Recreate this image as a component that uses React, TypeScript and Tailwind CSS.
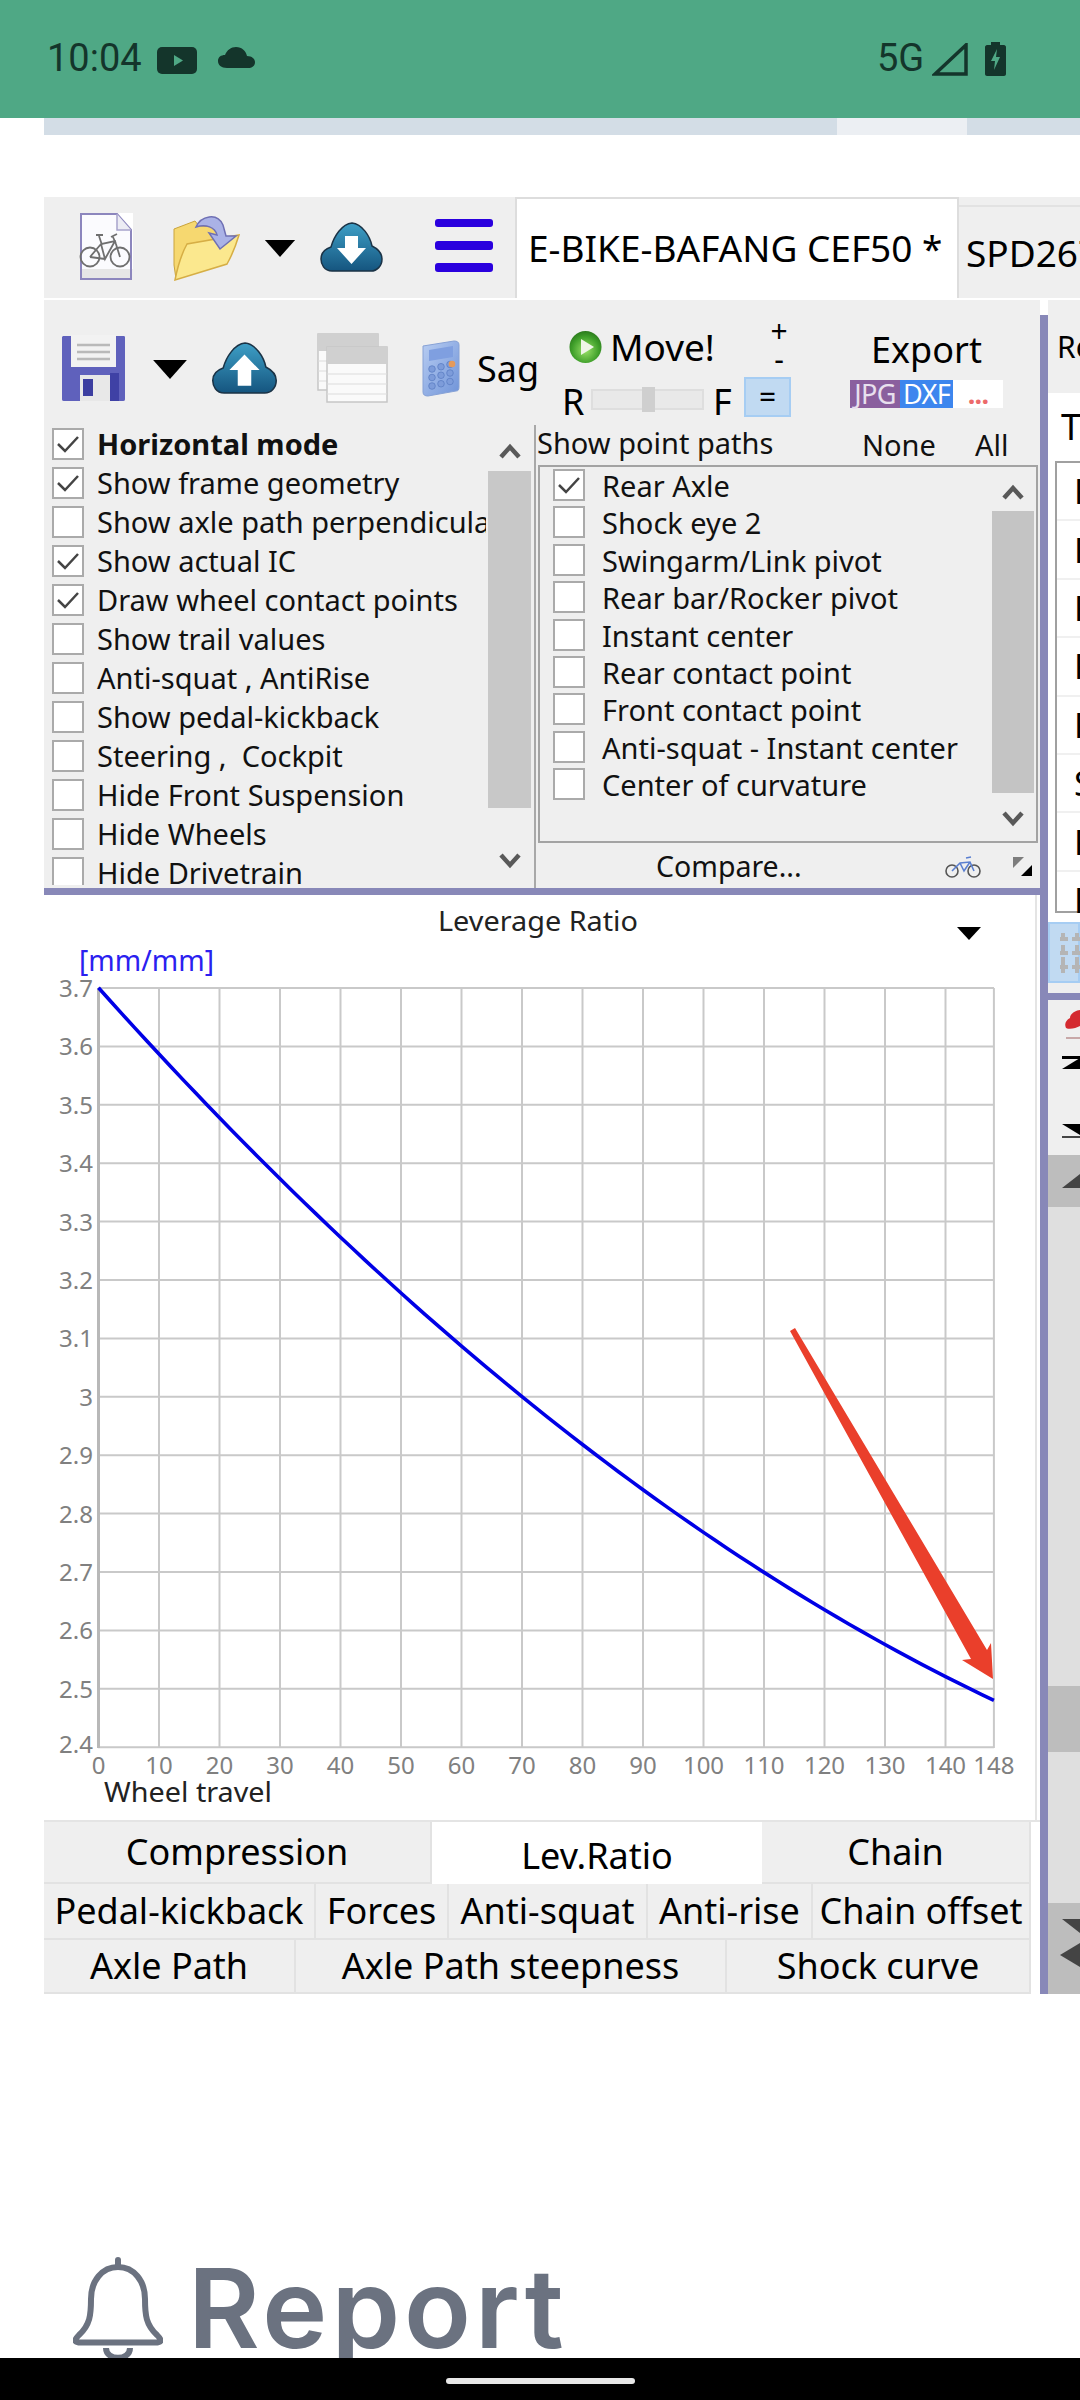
import React from "react";

const leftItems: [string, boolean][] = [
  ["Horizontal mode", true],
  ["Show frame geometry", true],
  ["Show axle path perpendicular", false],
  ["Show actual IC", true],
  ["Draw wheel contact points", true],
  ["Show trail values", false],
  ["Anti-squat , AntiRise", false],
  ["Show pedal-kickback", false],
  ["Steering ,  Cockpit", false],
  ["Hide Front Suspension", false],
  ["Hide Wheels", false],
  ["Hide Drivetrain", false],
];
const rightItems = [
  "Rear Axle",
  "Shock eye 2",
  "Swingarm/Link pivot",
  "Rear bar/Rocker pivot",
  "Instant center",
  "Rear contact point",
  "Front contact point",
  "Anti-squat - Instant center",
  "Center of curvature",
];

function Check({ on }: { on: boolean }) {
  return (
    <span className="flex h-[32px] w-[32px] shrink-0 items-center justify-center border-2 border-[#aaaaaa] bg-white">
      {on && (
        <svg width="24" height="20" viewBox="0 0 24 20">
          <path d="M2 10 L9 17 L22 3" fill="none" stroke="#444444" strokeWidth="2.5" />
        </svg>
      )}
    </span>
  );
}

function Chevron({ up }: { up: boolean }) {
  return (
    <svg width="22" height="16" viewBox="0 0 22 16">
      <path d={up ? "M2 14 L11 4 L20 14" : "M2 2 L11 12 L20 2"} fill="none" stroke="#595959" strokeWidth="4.5" />
    </svg>
  );
}

function Tri({ w, h }: { w: number; h: number }) {
  return (
    <svg width={w} height={h} viewBox="0 0 32 18">
      <path d="M0 0 H32 L16 18 Z" fill="#000000" />
    </svg>
  );
}

function Cloud({ up, id, w, h }: { up: boolean; id: string; w: number; h: number }) {
  return (
    <svg width={w} height={h} viewBox="0 0 63 50">
      <defs>
        <linearGradient id={id} x1="0" y1="0" x2="0" y2="1">
          <stop offset="0" stopColor="#3e9fc6" />
          <stop offset="1" stopColor="#15557f" />
        </linearGradient>
      </defs>
      <path
        d="M12 49 C4 49 1 42 1 37 C1 31 5 27 11 25 C14 14 22 2 32 1 C42 2 50 14 52 24 C58 27 62 31 62 37 C62 44 57 49 51 49 Z"
        fill={`url(#${id})`}
        stroke="#1b3346"
        strokeWidth="1.5"
      />
      <path
        d={up ? "M31.5 12 L46 27 H38 V42 H25 V27 H17 Z" : "M25 14 H38 V26 H46 L31.5 42 L17 26 H25 Z"}
        fill="#ffffff"
      />
    </svg>
  );
}

function DocIcon() {
  return (
    <svg width="56" height="68" viewBox="0 0 56 68">
      <rect x="38" y="0" width="16" height="56" fill="#ffffff" />
      <path d="M2 1 H38 L52 17 V66 H2 Z" fill="#fbfbfe" stroke="#8c86bd" strokeWidth="2" />
      <path d="M38 1 V17 H52" fill="#ececf4" stroke="#a8a4cc" strokeWidth="1.5" />
      <rect x="3" y="56" width="48" height="9" fill="#e6e6e6" />
      <g fill="none" stroke="#6f6f6f" strokeWidth="1.8">
        <circle cx="11" cy="44" r="9.5" />
        <circle cx="41" cy="44" r="9.5" />
        <path d="M11 44 L22 31 L36 28 L41 44 M22 31 L26 46 L36 28 M11 44 L26 46 M20 23 L23 32 M34 24 L37 31 M17 22 H24 M32 24 L38 21" />
      </g>
    </svg>
  );
}

function FolderIcon() {
  return (
    <svg width="68" height="66" viewBox="0 0 68 66">
      <path d="M1 14 L22 6 L26 11 L44 12 V30 L3 64 L1 50 Z" fill="#f6d870" stroke="#c9a33c" strokeWidth="1" />
      <path d="M2 65 C4 55 9 38 14 29 L66 20 C63 30 58 42 54 49 Z" fill="#fbe88e" stroke="#d6ae45" strokeWidth="1.5" />
      <path d="M23 12 C28 1 44 -3 50 10 L53 21 L63 21 L47 34 L36 18 L44 20 C42 12 33 9 23 12 Z" fill="#aab2e6" stroke="#6f70b4" strokeWidth="1.5" />
    </svg>
  );
}

function Burger() {
  return (
    <svg width="58" height="54" viewBox="0 0 58 54">
      <g fill="#2a00de">
        <rect x="0" y="0" width="58" height="8" rx="3" />
        <rect x="0" y="22" width="58" height="9" rx="3" />
        <rect x="0" y="44" width="58" height="9" rx="3" />
      </g>
    </svg>
  );
}

function Floppy() {
  return (
    <svg width="65" height="67" viewBox="0 0 65 67">
      <path d="M2 1 H63 C64 1 64 2 64 3 V64 C64 66 63 66 61 66 H4 C2 66 1 66 1 64 V2 Z" fill="#5f61bc" />
      <rect x="10" y="0" width="45" height="32" fill="#f2f2f2" />
      <g stroke="#b9b9b9" strokeWidth="2.5">
        <line x1="16" y1="10" x2="49" y2="10" />
        <line x1="16" y1="17" x2="49" y2="17" />
        <line x1="16" y1="24" x2="49" y2="24" />
      </g>
      <rect x="19" y="40" width="32" height="26" fill="#e8e8e8" />
      <rect x="22" y="44" width="10" height="17" fill="#3c3ea0" />
      <rect x="49" y="38" width="9" height="28" fill="#3f41a5" />
    </svg>
  );
}

function Tables() {
  const body = (x: number, y: number, w: number, h: number) => (
    <g>
      <rect x={x} y={y} width={w} height={h} fill="#fafafa" stroke="#c6c6c6" strokeWidth="1.5" />
      <rect x={x} y={y} width={w} height="17" fill="#d0d0d0" />
      <g stroke="#dcdcdc" strokeWidth="1">
        <line x1={x} y1={y + 27} x2={x + w} y2={y + 27} />
        <line x1={x} y1={y + 37} x2={x + w} y2={y + 37} />
        <line x1={x} y1={y + 47} x2={x + w} y2={y + 47} />
      </g>
    </g>
  );
  return (
    <svg width="71" height="70" viewBox="0 0 71 70">
      {body(1, 1, 60, 56)}
      {body(10, 14, 60, 55)}
    </svg>
  );
}

function Calc() {
  const keys: [number, number][] = [];
  for (let r = 0; r < 3; r++) for (let c = 0; c < 3; c++) keys.push([10 + c * 9, 29 + r * 8.5]);
  return (
    <svg width="38" height="57" viewBox="0 0 38 57">
      <defs>
        <linearGradient id="calcg" x1="0" y1="0" x2="1" y2="1">
          <stop offset="0" stopColor="#b8cdf2" />
          <stop offset="1" stopColor="#6f93d8" />
        </linearGradient>
      </defs>
      <path d="M1 6 L32 1 C35 1 37 2 37 5 V47 C37 50 36 51 34 51 L6 56 C3 56 1 55 1 52 Z" fill="url(#calcg)" stroke="#87a2d6" />
      <path d="M7 10 L31 6 V17 L7 21 Z" fill="#7f9fe0" />
      {keys.map(([x, y], i) => (
        <circle key={i} cx={x} cy={y - (x - 10) / 4} r="3.3" fill="#7d9cda" stroke="#587ac0" strokeWidth="0.7" />
      ))}
      <circle cx="30" cy="24" r="3.3" fill="#e59a5b" />
    </svg>
  );
}

function Play() {
  return (
    <svg width="33" height="34" viewBox="0 0 33 34">
      <defs>
        <radialGradient id="playg" cx="0.5" cy="0.6" r="0.6">
          <stop offset="0" stopColor="#9be26a" />
          <stop offset="0.7" stopColor="#3f9f2a" />
          <stop offset="1" stopColor="#2b7a1c" />
        </radialGradient>
      </defs>
      <circle cx="16.5" cy="17" r="16" fill="url(#playg)" />
      <path d="M12 9 L25 17 L12 25 Z" fill="#eef5e8" />
    </svg>
  );
}

function SmallBike() {
  return (
    <svg width="38" height="22" viewBox="0 0 38 22">
      <g fill="none" stroke="#555555" strokeWidth="1.6">
        <circle cx="8" cy="15" r="6" />
        <circle cx="30" cy="15" r="6" />
      </g>
      <path d="M8 15 L16 7 L26 6 L30 15 M16 7 L20 15 L26 6 M22 2 L27 1" fill="none" stroke="#5a7fd0" strokeWidth="1.6" />
    </svg>
  );
}

function Corner() {
  return (
    <svg width="19" height="19" viewBox="0 0 19 19">
      <path d="M0 0 H11 L0 11 Z" fill="#7d7d7d" />
      <path d="M19 19 H8 L19 8 Z" fill="#000000" />
    </svg>
  );
}

function Chart() {
  const xAt = (mm: number) => 98.5 + mm * 6.05;
  const yAt = (v: number) => 1747 - (v - 2.4) * 584;
  const curve: string[] = [];
  for (let m = 0; m <= 148; m += 2) {
    curve.push(`${xAt(m)},${yAt(3.7 - 0.011577 * m + 0.00002252 * m * m)}`);
  }
  const ticks = [0, 10, 20, 30, 40, 50, 60, 70, 80, 90, 100, 110, 120, 130, 140, 148];
  const vals = ["3.7", "3.6", "3.5", "3.4", "3.3", "3.2", "3.1", "3", "2.9", "2.8", "2.7", "2.6", "2.5", "2.4"];
  return (
    <svg width="996" height="927" viewBox="44 895 996 927" className="block font-['Noto_Sans',sans-serif]">
      <rect x="44" y="895" width="996" height="927" fill="#ffffff" />
      <rect x="1035" y="895" width="2" height="925" fill="#e4e4e4" />
      <rect x="44" y="1820" width="996" height="2" fill="#e4e4e4" />
      <text x="438" y="931" fontSize="28" fill="#222222" textLength="200" lengthAdjust="spacingAndGlyphs">Leverage Ratio</text>
      <path d="M957 927 H981 L969 940 Z" fill="#000000" />
      <text x="79" y="971" fontSize="29" fill="#2a20f0" textLength="135" lengthAdjust="spacingAndGlyphs">[mm/mm]</text>
      {vals.map((v, i) => (
        <g key={v}>
          <line x1="98" x2="994" y1={988 + i * 58.4} y2={988 + i * 58.4} stroke="#c9c9c9" strokeWidth="2" />
          <text x="93" y={997 + i * 58.4 - (i === 13 ? 3 : 0)} fontSize="24" fill="#808080" textAnchor="end">{v}</text>
        </g>
      ))}
      {ticks.map((t) => (
        <g key={t}>
          <line x1={xAt(t)} x2={xAt(t)} y1="988" y2="1748" stroke={t === 0 ? "#b8b8b8" : "#c9c9c9"} strokeWidth={t === 0 ? 3 : 2} />
          <text x={xAt(t)} y="1774" fontSize="24" fill="#808080" textAnchor="middle">{t}</text>
        </g>
      ))}
      <text x="104" y="1802" fontSize="28" fill="#222222" textLength="168" lengthAdjust="spacingAndGlyphs">Wheel travel</text>
      <polyline points={curve.join(" ")} fill="none" stroke="#0000e6" strokeWidth="3.6" />
      <path d="M790 1331 L795 1328 L987 1650 L991 1643 L993 1679 L962 1660 L971 1659 Z" fill="#ea3f2b" />
    </svg>
  );
}

function Tab({ w, h, label, active, pt }: { w: string; h: string; label: string; active?: boolean; pt?: string }) {
  return (
    <div
      className={`${w} ${h} ${pt ?? ""} flex items-center justify-center overflow-hidden text-[36px] leading-none whitespace-nowrap text-black ${
        active ? "bg-white" : "border-r-2 border-b-2 border-[#e2e2e2] bg-[#efefef]"
      }`}
    >
      {label}
    </div>
  );
}

export default function App() {
  return (
    <div className="flex h-[2400px] w-[1080px] flex-col overflow-hidden bg-white font-['Noto_Sans',sans-serif]">
      {/* status bar */}
      <div className="flex h-[118px] shrink-0 items-start bg-[#4fa885] text-[#14352b]">
        <span className="mt-[36px] ml-[47px] w-[94px] font-['Roboto',sans-serif] text-[38px] leading-[44px]">10:04</span>
        <svg className="mt-[47px] ml-[16px]" width="40" height="27" viewBox="0 0 40 27">
          <rect width="40" height="27" rx="5" fill="#14352b" />
          <path d="M17 8 L26 13.5 L17 19 Z" fill="#4fa885" />
        </svg>
        <svg className="mt-[47px] ml-[21px]" width="37" height="22" viewBox="0 0 37 22">
          <path d="M9 21 C3 21 0 18 0 14 C0 10 3 8 7 8 C9 3 13 0 18 0 C24 0 28 4 29 9 C34 9 37 12 37 15 C37 19 34 21 30 21 Z" fill="#14352b" />
        </svg>
        <span className="mt-[36px] ml-[622px] w-[46px] font-['Roboto',sans-serif] text-[38px] leading-[44px]">5G</span>
        <svg className="mt-[43px] ml-[9px]" width="36" height="33" viewBox="0 0 36 33">
          <path d="M34 2 V31 H3 Z" fill="none" stroke="#14352b" strokeWidth="3.5" />
        </svg>
        <svg className="mt-[42px] ml-[17px]" width="21" height="34" viewBox="0 0 21 34">
          <path d="M6 0 H15 V3 H19 C20 3 21 4 21 5 V32 C21 33 20 34 19 34 H2 C1 34 0 33 0 32 V5 C0 4 1 3 2 3 H6 Z" fill="#14352b" />
          <path d="M12 7 L6 19 H10 L9 28 L15 15 H11 Z" fill="#4fa885" />
        </svg>
      </div>

      {/* clipped strip of page above */}
      <div className="ml-[44px] flex h-[17px] shrink-0">
        <div className="w-[793px] bg-[#d3dde6]" />
        <div className="w-[130px] bg-[#eceff3]" />
        <div className="flex-1 bg-[#d3dde6]" />
      </div>
      <div className="h-[62px] shrink-0" />

      {/* embedded app */}
      <div className="ml-[44px] h-[1797px] shrink-0">
        {/* file tabs */}
        <div className="flex h-[101px] items-start overflow-hidden bg-[#efefef]">
          <div className="mt-[16px] ml-[35px]"><DocIcon /></div>
          <div className="mt-[18px] ml-[38px]"><FolderIcon /></div>
          <div className="mt-[43px] ml-[23px]"><Tri w={32} h={17} /></div>
          <div className="mt-[25px] ml-[24px]"><Cloud up={false} id="cl1" w={63} h={50} /></div>
          <div className="mt-[22px] ml-[52px]"><Burger /></div>
          <div className="ml-[22px] flex h-[101px] w-[444px] shrink-0 items-center border-x-2 border-t-2 border-[#dddddd] bg-white pb-[2px] pl-[11px] text-[37px] leading-none whitespace-nowrap text-black">
            E-BIKE-BAFANG CEF50 *
          </div>
          <div className="mt-[8px] flex h-[93px] flex-1 items-center border-t-2 border-[#e2e2e2] pl-[7px] text-[37px] leading-none whitespace-nowrap text-black">
            SPD267
          </div>
        </div>
        <div className="h-[2px] bg-white" />

        <div className="flex h-[1694px]">
          {/* left column */}
          <div className="flex w-[996px] shrink-0 flex-col bg-[#efefef]">
            {/* toolbar */}
            <div className="flex h-[125px] shrink-0 items-start">
              <div className="mt-[35px] ml-[17px]"><Floppy /></div>
              <div className="mt-[60px] ml-[27px]"><Tri w={34} h={19} /></div>
              <div className="mt-[42px] ml-[24px]"><Cloud up={true} id="cl2" w={67} h={52} /></div>
              <div className="mt-[33px] ml-[39px]"><Tables /></div>
              <div className="mt-[40px] ml-[34px]"><Calc /></div>
              <span className="mt-[46px] ml-[17px] w-[63px] text-[36px] leading-[46px] text-black">Sag</span>
              <div className="ml-[22px] flex w-[229px] flex-col">
                <div className="flex h-[77px] items-start">
                  <div className="mt-[30px] ml-[7px]"><Play /></div>
                  <span className="mt-[25px] ml-[8px] w-[159px] text-[37px] leading-[44px] text-black">Move!</span>
                  <div className="mt-[17px] flex w-[20px] flex-col items-center text-[30px] leading-[28px] text-black">
                    <span>+</span>
                    <span>-</span>
                  </div>
                </div>
                <div className="flex h-[48px] items-start">
                  <span className="mt-[3px] w-[29px] text-[36px] leading-[44px] text-black">R</span>
                  <div className="relative mt-[12px] h-[21px] w-[113px] border-2 border-[#dedede] bg-[#e9e9e9]">
                    <div className="absolute top-[-4px] left-[49px] h-[25px] w-[13px] bg-[#cfcfcf]" />
                  </div>
                  <span className="mt-[3px] ml-[9px] w-[31px] text-[36px] leading-[44px] text-black">F</span>
                  <div className="flex h-[40px] w-[47px] items-center justify-center border-2 border-[#a6cdf3] bg-[#c1daf2] text-[30px] leading-none text-black">=</div>
                </div>
              </div>
              <div className="ml-[59px] flex w-[153px] flex-col items-center">
                <span className="mt-[28px] text-[36px] leading-[44px] text-black">Export</span>
                <div className="mt-[8px] flex h-[28px] w-[153px] text-[27px] leading-[28px] tracking-tight">
                  <span className="w-[50px] bg-[#8a5f9e] text-center text-[#e8e0ee]">JPG</span>
                  <span className="w-[53px] bg-[#3d86ee] text-center text-white">DXF</span>
                  <span className="flex-1 bg-white text-center font-bold text-[#ec6a6a]">...</span>
                </div>
              </div>
            </div>

            {/* option lists */}
            <div className="flex h-[463px] shrink-0">
              <div className="flex h-[460px] w-[490px] shrink-0">
                <div className="w-[442px] shrink-0 overflow-hidden pt-[3px]">
                  {leftItems.map(([label, on], i) => (
                    <div key={label} className="flex h-[39px] items-start pl-[8px]">
                      <Check on={on} />
                      <span className={`ml-[13px] text-[29px] leading-[32px] whitespace-pre text-[#111111] ${i === 0 ? "font-bold" : ""}`}>
                        {label}
                      </span>
                    </div>
                  ))}
                </div>
                <div className="ml-[2px] flex w-[43px] shrink-0 flex-col items-center">
                  <div className="flex h-[46px] items-center justify-center pt-[5px]"><Chevron up={true} /></div>
                  <div className="h-[337px] w-full bg-[#c8c8c8]" />
                  <div className="mt-[45px]"><Chevron up={false} /></div>
                </div>
              </div>
              <div className="flex w-[506px] shrink-0 flex-col border-l-2 border-[#a8a8a8]">
                <div className="flex h-[40px] shrink-0 items-start text-[29px] leading-[36px] text-[#111111]">
                  <span className="ml-[1px] w-[325px]">Show point paths</span>
                  <span className="mt-[2px] w-[113px]">None</span>
                  <span className="mt-[2px]">All</span>
                </div>
                <div className="ml-[2px] flex h-[378px] w-[500px] shrink-0 border-2 border-[#a3a3a3]">
                  <div className="w-[450px] shrink-0 pt-[2px]">
                    {rightItems.map((label, i) => (
                      <div key={label} className="flex h-[37.4px] items-start pl-[13px]">
                        <Check on={i === 0} />
                        <span className="mt-[1px] ml-[17px] text-[29px] leading-[32px] whitespace-nowrap text-[#111111]">{label}</span>
                      </div>
                    ))}
                  </div>
                  <div className="ml-[2px] flex w-[42px] shrink-0 flex-col items-center">
                    <div className="flex h-[44px] items-center justify-center pt-[6px]"><Chevron up={true} /></div>
                    <div className="h-[282px] w-full bg-[#c4c4c4]" />
                    <div className="mt-[18px]"><Chevron up={false} /></div>
                  </div>
                </div>
                <div className="flex h-[45px] shrink-0 items-center pt-[2px]">
                  <span className="ml-[120px] w-[288px] text-[28.5px] leading-none text-[#111111]">Compare...</span>
                  <SmallBike />
                  <div className="ml-[31px]"><Corner /></div>
                </div>
              </div>
            </div>

            <div className="h-[7px] shrink-0 bg-[#8888b8]" />
            <Chart />

            {/* chart tabs */}
            <div className="flex h-[172px] shrink-0 flex-col bg-white">
              <div className="flex">
                <Tab w="w-[388px]" h="h-[62px]" label="Compression" />
                <Tab w="w-[330px]" h="h-[62px]" label="Lev.Ratio" active pt="pt-[6px]" />
                <Tab w="w-[269px]" h="h-[62px]" label="Chain" />
              </div>
              <div className="flex">
                <Tab w="w-[272px]" h="h-[56px]" label="Pedal-kickback" />
                <Tab w="w-[133px]" h="h-[56px]" label="Forces" />
                <Tab w="w-[199px]" h="h-[56px]" label="Anti-squat" />
                <Tab w="w-[165px]" h="h-[56px]" label="Anti-rise" />
                <Tab w="w-[218px]" h="h-[56px]" label="Chain offset" />
              </div>
              <div className="flex">
                <Tab w="w-[252px]" h="h-[54px]" label="Axle Path" />
                <Tab w="w-[431px]" h="h-[54px]" label="Axle Path steepness" />
                <Tab w="w-[304px]" h="h-[54px]" label="Shock curve" />
              </div>
            </div>
          </div>

          {/* splitter */}
          <div className="mt-[15px] w-[8px] shrink-0 bg-[#8888b8]" />

          {/* right strip */}
          <div className="flex w-[32px] shrink-0 flex-col overflow-hidden">
            <div className="flex h-[93px] shrink-0 items-center bg-[#efefef] pl-[9px] text-[30px] leading-none whitespace-nowrap text-black">
              Report
            </div>
            <div className="flex h-[68px] shrink-0 items-center bg-white pl-[13px] text-[36px] leading-none text-black">T</div>
            <div className="ml-[7px] h-[452px] shrink-0 border-y-2 border-l-2 border-[#a0a0a0] bg-white">
              {["R", "R", "R", "R", "R", "S", "R", "R", "R"].map((c, i) => (
                <div
                  key={i}
                  className="flex h-[58.4px] items-center overflow-hidden border-b-2 border-[#f0f0f0] pl-[17px] text-[34px] leading-none text-black"
                >
                  {c}
                </div>
              ))}
            </div>
            <div className="h-[9px] shrink-0 bg-white" />
            <div className="flex h-[61px] shrink-0 items-center border-2 border-[#a6cdf3] bg-[#c1daf2] pl-[10px]">
              <svg width="22" height="40" viewBox="0 0 22 40" className="shrink-0">
                <g stroke="#b5b5b5" strokeWidth="4" strokeDasharray="8 4">
                  <line x1="0" y1="6" x2="22" y2="6" />
                  <line x1="0" y1="20" x2="22" y2="20" />
                  <line x1="0" y1="34" x2="22" y2="34" />
                  <line x1="3" y1="0" x2="3" y2="40" />
                  <line x1="17" y1="0" x2="17" y2="40" />
                </g>
              </svg>
            </div>
            <div className="h-[10px] shrink-0 bg-[#efefef]" />
            <div className="h-[7px] shrink-0 bg-[#8888b8]" />
            <div className="flex h-[155px] shrink-0 flex-col bg-[#efefef]">
              <svg className="mt-[10px] ml-[16px]" width="16" height="30" viewBox="0 0 16 30">
                <path d="M16 0 C8 1 6 6 6 8 C2 10 0 14 2 18 C6 20 12 18 16 16 Z" fill="#d42a30" />
                <path d="M2 28 H16" stroke="#c8a8a8" strokeWidth="2" />
              </svg>
              <svg className="mt-[16px] ml-[14px]" width="18" height="14" viewBox="0 0 18 14">
                <path d="M0 3 H18 V0 H0 Z" fill="#000000" />
                <path d="M0 13 L18 13 V2 Z" fill="#000000" />
              </svg>
              <svg className="mt-[54px] ml-[14px]" width="18" height="15" viewBox="0 0 18 15">
                <path d="M0 0 L18 0 V11 Z" fill="#000000" />
                <path d="M0 13 H18" stroke="#444444" strokeWidth="2" />
              </svg>
            </div>
            <div className="flex h-[52px] shrink-0 items-center bg-[#bdbdbd] pl-[14px]">
              <svg width="18" height="14" viewBox="0 0 18 14"><path d="M0 14 L18 14 V0 Z" fill="#444444" /></svg>
            </div>
            <div className="h-[479px] shrink-0 bg-[#dfdfdf]" />
            <div className="h-[66px] shrink-0 bg-[#bdbdbd]" />
            <div className="h-[151px] shrink-0 bg-[#dfdfdf]" />
            <div className="flex h-[91px] shrink-0 flex-col bg-[#bdbdbd] pl-[14px]">
              <svg className="mt-[16px]" width="18" height="14" viewBox="0 0 18 14"><path d="M0 0 H18 V14 Z" fill="#444444" /></svg>
              <svg className="mt-[10px] -ml-[2px]" width="20" height="24" viewBox="0 0 20 24"><path d="M0 12 L20 0 V24 Z" fill="#444444" /></svg>
            </div>
          </div>
        </div>
      </div>

      {/* page content below */}
      <div className="flex h-[364px] shrink-0 items-start overflow-hidden pt-[263px] pl-[73px] text-[#6b7280]">
        <svg width="90" height="101" viewBox="0 0 90 101" className="shrink-0">
          <path
            d="M45 10 C29 10 18 24 18 42 C18 58 17 68 6 78 C0 84 2 85.5 8 85.5 H82 C88 85.5 90 84 84 78 C73 68 72 58 72 42 C72 24 61 10 45 10 Z"
            fill="none"
            stroke="#6b7280"
            strokeWidth="6"
          />
          <path d="M45 3 V10" stroke="#6b7280" strokeWidth="6" strokeLinecap="round" />
          <path d="M33 91 C33 104 57 104 57 91" fill="none" stroke="#6b7280" strokeWidth="6" />
        </svg>
        <span className="-mt-[4px] ml-[25px] font-['Inter',sans-serif] text-[110px] leading-[110px] font-semibold tracking-[4px]">Report</span>
      </div>

      {/* navigation bar */}
      <div className="flex h-[42px] shrink-0 items-start justify-center bg-black pt-[20px]">
        <div className="h-[6px] w-[189px] rounded-full bg-[#e8e8e8]" />
      </div>
    </div>
  );
}
